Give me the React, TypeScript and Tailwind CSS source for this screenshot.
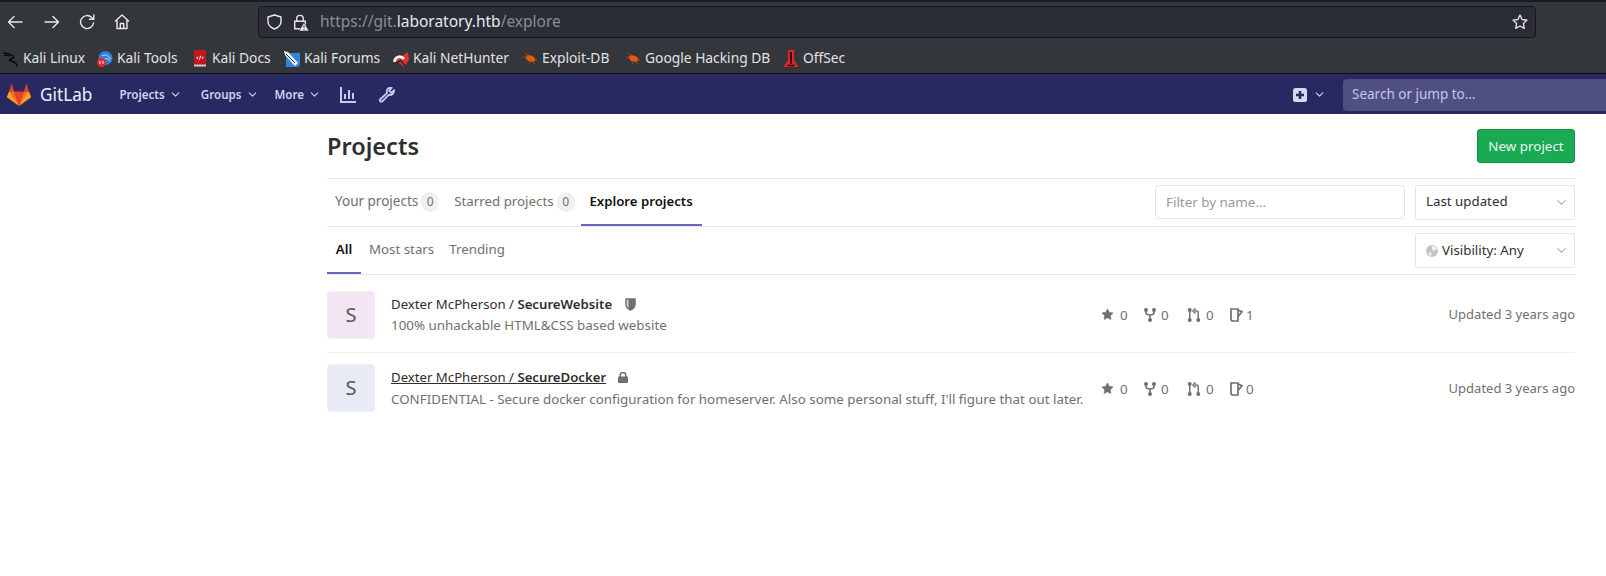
import React from "react";
import { ChevronDown, Star } from "lucide-react";

const font = { fontFamily: '"Noto Sans", sans-serif' };

const BackIcon = () => (
  <svg width="16" height="14" viewBox="0 0 16 14" fill="none" stroke="#e8e8ea" strokeWidth="1.4" strokeLinecap="round" strokeLinejoin="round">
    <path d="M15 7H1.500M7 1.500L1.500 7 7 12.500" />
  </svg>
);

const ForwardIcon = () => (
  <svg width="16" height="14" viewBox="0 0 16 14" fill="none" stroke="#e8e8ea" strokeWidth="1.4" strokeLinecap="round" strokeLinejoin="round">
    <path d="M1 7h13.500M9 1.500L14.500 7 9 12.500" />
  </svg>
);

const ReloadIcon = () => (
  <svg width="16" height="16" viewBox="0 0 16 16" fill="none" stroke="#e8e8ea" strokeWidth="1.4" strokeLinecap="round" strokeLinejoin="round">
    <path d="M14.500 9a6.500 6.500 0 1 1-1.800-5.500L14.500 5" />
    <path d="M14.800 1v4.300h-4.300" />
  </svg>
);

const HomeIcon = () => (
  <svg width="16" height="16" viewBox="0 0 16 16" fill="none" stroke="#e8e8ea" strokeWidth="1.4" strokeLinejoin="round">
    <path d="M1 7.500L8 1l7 6.500M3 6v8.500h10V6" />
    <path d="M6.300 14.500v-5h3.400v5" />
  </svg>
);

const ToolbarShield = () => (
  <svg width="15" height="16" viewBox="0 0 15 16" fill="none" stroke="#e8e8ea" strokeWidth="1.4" strokeLinejoin="round">
    <path d="M7.500 1l6.500 2v4.500c0 3.500-2.500 6-6.500 7.500C3.500 13.500 1 11 1 7.500V3z" />
  </svg>
);

const LockWarn = () => (
  <svg width="16" height="17" viewBox="0 0 16 17">
    <path d="M3.700 7V4.700a3.300 3.300 0 0 1 6.600 0V7" fill="none" stroke="#e8e8ea" strokeWidth="1.400" />
    <path d="M1.700 7.200h10.600v7.600H1.700z" fill="none" stroke="#e8e8ea" strokeWidth="1.400" />
    <path d="M11 8.500l5 8.500H6z" fill="#f4f4f4" stroke="#33363b" strokeWidth="0.700" />
    <path d="M11 11.500v2.500M11 15v1" stroke="#22242a" strokeWidth="1" />
  </svg>
);

const UrlStar = () => (
  <svg width="16" height="16" viewBox="0 0 16 16" fill="none" stroke="#e8e8ea" strokeWidth="1.300" strokeLinejoin="round">
    <path d="M8 1l2.100 4.500 4.900.6-3.600 3.400.9 4.900L8 12l-4.300 2.400.9-4.900L1 6.100l4.900-.6z" />
  </svg>
);

const KaliIcon = () => (
  <svg width="16" height="16" viewBox="0 0 16 16" fill="none" stroke="#050505" strokeWidth="1.300">
    <path d="M0 2.500C3 1.500 6.500 2.500 9.500 4.500c2 1.500 1 3-1.500 3.500-2 .5-2 2 1 2.300 2.500.3 4.500 1.700 5.500 5" />
    <path d="M1 5c2-1.200 4-1 6 0" />
  </svg>
);

const ToolsIcon = () => (
  <svg width="16" height="16" viewBox="0 0 16 16">
    <circle cx="8.500" cy="7" r="7" fill="#2f7fd6" />
    <path d="M5 5c3-2 6-1 9 3M8 8c2-1 4 0 5 2" stroke="#cfe4f7" fill="none" />
    <circle cx="4.500" cy="11.500" r="4.500" fill="#e02b2b" />
    <path d="M3 10v3M6 10v3" stroke="#fff" />
  </svg>
);

const DocsIcon = () => (
  <svg width="12" height="17" viewBox="0 0 12 17">
    <rect width="12" height="14.500" fill="#c4161c" />
    <rect y="14.500" width="12" height="2" fill="#e3c4c4" />
    <path d="M4 6.500L2.800 7.800 4 9M8 6.500l1.200 1.300L8 9M6.700 5.800L5.300 9.800" stroke="#fff" fill="none" />
  </svg>
);

const ForumsIcon = () => (
  <svg width="16" height="16" viewBox="0 0 16 16">
    <path d="M2 2h14v12l-2 2H2z" fill="#2f86e0" />
    <path d="M0 0l4 1 10 11-3 3L1 4z" fill="#f2f2f2" />
    <path d="M2 3l9 9" stroke="#222" strokeWidth="1" />
  </svg>
);

const HunterIcon = () => (
  <svg width="16" height="16" viewBox="0 0 16 16">
    <path d="M2 9L15 1l1 8-5 7z" fill="#e0332f" />
    <path d="M1.500 11c0-5 6-7.500 9.500-3" stroke="#f4f4f4" strokeWidth="2.600" fill="none" />
    <path d="M5 12c0-2 3-3 4-1l3 4" stroke="#2e2e2e" strokeWidth="1.800" fill="none" />
  </svg>
);

const BugIcon = () => (
  <svg width="14" height="11" viewBox="0 0 14 11">
    <ellipse cx="7.500" cy="5.500" rx="5" ry="3" fill="#e8590c" transform="rotate(20 7.500 5.500)" />
    <path d="M0 4l5 1M2 0l4 3M6 11l2-3M12 11l-2-2M14 7l-3 0" stroke="#b9500f" strokeWidth="0.800" />
  </svg>
);

const OffSecIcon = () => (
  <svg width="14" height="18" viewBox="0 0 14 18">
    <path d="M4 0h6v10l4 6v1H0v-1l4-6z" fill="#e0242c" />
    <path d="M7 2v12" stroke="#3a0a0a" strokeWidth="2" />
    <path d="M3.500 15.500h7" stroke="#3a0a0a" strokeWidth="1.600" />
  </svg>
);

const GitLabLogo = () => (
  <svg width="24" height="22" viewBox="0 0 24 22">
    <path d="M12 22L.3 13.500c-.3-.3-.4-.7-.3-1L2 7.500h5z" fill="#fca326" />
    <path d="M12 22l11.700-8.500c.3-.3.4-.7.3-1L22 7.500h-5z" fill="#fca326" />
    <path d="M12 22L2 7.500h5z" fill="#fc6d26" />
    <path d="M12 22L22 7.500h-5z" fill="#fc6d26" />
    <path d="M12 22L7 7.500h10z" fill="#e24329" />
    <path d="M2 7.500L4.300.4c.1-.4.6-.4.8 0L7 7.500z" fill="#e24329" />
    <path d="M22 7.500L19.700.4c-.1-.4-.6-.4-.8 0L17 7.500z" fill="#e24329" />
  </svg>
);

const ChartIcon = () => (
  <svg width="16" height="16" viewBox="0 0 16 16" fill="#c8c8f0">
    <path d="M0 0h2v14h14v2H0z" />
    <rect x="4" y="7" width="2" height="5" />
    <rect x="8" y="3" width="2" height="9" />
    <rect x="12" y="6" width="2" height="6" />
  </svg>
);

const WrenchIcon = () => (
  <svg width="16" height="16" viewBox="0 0 16 16" fill="none" stroke="#c8c8f0" strokeWidth="1.800">
    <path d="M15 3.500l-2.800 2.300-2-2L12.500 1C10 .2 7.600 2 7.800 4.600c0 .5.1.9.3 1.300L1.600 12c-.9.9-.9 1.700-.3 2.400.7.6 1.500.5 2.300-.3l6.200-6.300c2.800.9 5.500-1.600 5.200-4.300z" />
  </svg>
);

const PlusSquare = () => (
  <svg width="14" height="14" viewBox="0 0 14 14">
    <rect width="14" height="14" rx="2.500" fill="#d8d8f2" />
    <path d="M7 3v8M3 7h8" stroke="#2b2a63" strokeWidth="2.600" />
  </svg>
);

const ForkIcon = () => (
  <svg width="12" height="14" viewBox="0 0 12 14" fill="none" stroke="#707070" strokeWidth="1.600">
    <circle cx="2" cy="2" r="1.200" fill="#707070" />
    <circle cx="10" cy="2" r="1.200" fill="#707070" />
    <circle cx="6" cy="12" r="1.200" fill="#707070" />
    <path d="M2 3v1.500c0 1.500 1 2.500 4 2.500s4-1 4-2.500V3M6 7v4" />
  </svg>
);

const MergeIcon = () => (
  <svg width="12" height="14" viewBox="0 0 12 14" fill="none" stroke="#707070" strokeWidth="1.500">
    <circle cx="1.800" cy="2" r="1.200" fill="#707070" />
    <circle cx="1.800" cy="12" r="1.200" fill="#707070" />
    <circle cx="10.200" cy="12" r="1.200" fill="#707070" />
    <path d="M1.800 3v8M10.200 11V4.500C10.200 3.500 9.700 3 8.700 3H7" />
    <path d="M7.500 .5L5 3l2.500 2.500" />
  </svg>
);

const IssueIcon = () => (
  <svg width="13" height="14" viewBox="0 0 13 14" fill="none" stroke="#707070" strokeWidth="1.700">
    <path d="M1 1h7v12H3c-1.200 0-2-.8-2-2z" />
    <path d="M8 2l4 1.800-4 4.700" />
  </svg>
);

const ShieldFilled = () => (
  <svg width="11" height="13" viewBox="0 0 11 13">
    <path d="M1 1h9v5c0 3-2 5-4.500 6C3 11 1 9 1 6z" fill="#d8d8d8" stroke="#707070" strokeWidth="1.500" />
    <path d="M3.500 1h6.500v5c0 3-2 5-4.500 6-.8-.3-1.400-.7-2-1.200z" fill="#707070" />
  </svg>
);

const LockFilled = () => (
  <svg width="10" height="11" viewBox="0 0 10 11">
    <rect y="4.500" width="10" height="6.500" rx="1" fill="#707070" />
    <path d="M2.200 5V3.200a2.800 2.800 0 0 1 5.600 0V5" stroke="#707070" strokeWidth="1.500" fill="none" />
  </svg>
);

const GlobeIcon = () => (
  <svg width="12" height="12" viewBox="0 0 12 12">
    <circle cx="6" cy="6" r="6" fill="#c4c4c4" />
    <path d="M6 1c2-.5 4 .5 5 3L8 6 6 4.500zM3 7l3 1-1 3.500C3.500 11 2 9.500 3 7z" fill="#eeeeee" />
  </svg>
);

const bookmarks = [
  { name: "Kali Linux", icon: <KaliIcon />, cls: "w-[94px] gap-[4px]" },
  { name: "Kali Tools", icon: <ToolsIcon />, cls: "w-[97px] gap-[4px]" },
  { name: "Kali Docs", icon: <DocsIcon />, cls: "w-[90px] gap-[6px]" },
  { name: "Kali Forums", icon: <ForumsIcon />, cls: "w-[109px] gap-[4px]" },
  { name: "Kali NetHunter", icon: <HunterIcon />, cls: "w-[130px] gap-[4px]" },
  { name: "Exploit-DB", icon: <BugIcon />, cls: "w-[103px] gap-[5px]" },
  { name: "Google Hacking DB", icon: <BugIcon />, cls: "w-[158px] gap-[5px]" },
  { name: "OffSec", icon: <OffSecIcon />, cls: "gap-[5px]" },
];

const projects = [
  {
    name: "SecureWebsite",
    desc: "100% unhackable HTML&CSS based website",
    bg: "bg-[#f4e5f4]",
    issues: 1,
    badge: <ShieldFilled />,
    gap: "ml-[13px]",
    link: false,
    row: "pt-[3px] border-b border-[#f0f0f0]",
    stats: "",
    lead: "leading-[21px]",
  },
  {
    name: "SecureDocker",
    desc: "CONFIDENTIAL - Secure docker configuration for homeserver. Also some personal stuff, I'll figure that out later.",
    bg: "bg-[#e8eaf6]",
    issues: 0,
    badge: <LockFilled />,
    gap: "ml-[12px]",
    link: true,
    row: "pb-[8px]",
    stats: "mt-[2px]",
    lead: "leading-[22px]",
  },
];

const Stat = ({ icon, value, cls }: { icon: React.ReactNode; value: number; cls: string }) => (
  <div className={`flex items-center ${cls}`}>
    {icon}
    <span>{value}</span>
  </div>
);

const NavItem = ({ label, cls }: { label: string; cls: string }) => (
  <div className={`flex items-center gap-[4px] text-[11.6px] font-semibold text-[#d1d1f0] ${cls}`}>
    {label}
    <ChevronDown size={13} strokeWidth={2} />
  </div>
);

const Badge = () => (
  <span className="ml-[3px] flex h-[20px] w-[18px] items-center justify-center rounded-full bg-[#f0f0f0] text-[12px]">0</span>
);

export default function App() {
  return (
    <div className="flex h-[576px] w-[1606px] flex-col overflow-hidden bg-white" style={font}>
      {/* browser chrome */}
      <div className="h-[2px] bg-[#1c1b22]" />
      <div className="flex h-[71px] flex-col bg-[#33363b]">
        <div className="flex h-[40px] items-center">
          <div className="flex w-[258px] items-center">
            <span className="ml-[7px]"><BackIcon /></span>
            <span className="ml-[21px]"><ForwardIcon /></span>
            <span className="ml-[19px]"><ReloadIcon /></span>
            <span className="ml-[19px]"><HomeIcon /></span>
          </div>
          <div className="flex h-[32px] w-[1278px] items-center rounded-[4px] border border-[#16161a] bg-[#2a2c36] text-[15.5px]">
            <span className="ml-[8px]"><ToolbarShield /></span>
            <span className="ml-[11px]"><LockWarn /></span>
            <span className="ml-[11px] text-[#8b8c92]">
              https://git.<span className="text-[#e8e8ea]">laboratory.htb</span>/explore
            </span>
            <span className="ml-auto mr-[7px]"><UrlStar /></span>
          </div>
        </div>
        <div className="flex h-[31px] items-center pl-[3px] pt-[2px] text-[13.8px] text-[#e2e2e4]">
          {bookmarks.map((b) => (
            <div key={b.name} className={`flex items-center ${b.cls}`}>
              {b.icon}
              <span>{b.name}</span>
            </div>
          ))}
        </div>
      </div>

      {/* gitlab nav */}
      <div className="flex h-[41px] items-center border-t border-[#0f0f12] bg-[#292961] pt-[1px]">
        <div className="ml-[7px]">
          <GitLabLogo />
        </div>
        <span className="ml-[9px] text-[17.2px] text-[#f0f0fa]">GitLab</span>
        <NavItem label="Projects" cls="ml-[27px]" />
        <NavItem label="Groups" cls="ml-[19px]" />
        <NavItem label="More" cls="ml-[16px]" />
        <div className="ml-[19px]">
          <ChartIcon />
        </div>
        <div className="ml-[23px]">
          <WrenchIcon />
        </div>
        <div className="ml-auto flex items-center gap-[6px] text-[#d1d1f0]">
          <PlusSquare />
          <ChevronDown size={13} strokeWidth={2} />
        </div>
        <div className="ml-[17px] flex h-[32px] w-[263px] items-center rounded-l-[4px] bg-[#4f4f82] pl-[9px] text-[13.5px] text-[#c5c5e8]">
          Search or jump to…
        </div>
      </div>

      {/* page */}
      <div className="ml-[327px] mr-[31px] flex flex-col">
        <div className="flex h-[65px] items-center justify-between border-b border-[#e5e5e5]">
          <h1 className="pt-[2px] text-[23.5px] font-semibold text-[#2e2e2e]">Projects</h1>
          <button className="h-[34px] w-[98px] rounded-[3px] border border-[#168f48] bg-[#1aaa55] text-[13.4px] text-[#e8f7ee]">
            New project
          </button>
        </div>

        <div className="flex h-[48px] items-center justify-between border-b border-[#e5e5e5]">
          <div className="flex h-full items-stretch text-[13.5px] text-[#707070]">
            <div className="flex items-center pb-[2px] pl-[8px]">
              Your projects
              <Badge />
            </div>
            <div className="ml-[15px] flex items-center pb-[2px] text-[13.3px]">
              Starred projects
              <Badge />
            </div>
            <div className="ml-[6px] flex w-[121px] items-center justify-center border-b-2 border-[#6666c4] text-[13.2px] font-semibold text-[#111111]">
              Explore projects
            </div>
          </div>
          <div className="mb-[1px] flex items-center gap-[10px]">
            <div className="flex h-[34px] w-[250px] items-center rounded-[4px] border border-[#e5e5e5] pl-[10px] text-[13.4px] text-[#9a9a9a]">
              Filter by name...
            </div>
            <div className="flex h-[35px] w-[160px] items-center justify-between rounded-[3px] border border-[#e5e5e5] pl-[10px] pr-[5px] text-[13.3px] text-[#2e2e2e]">
              Last updated
              <ChevronDown size={15} strokeWidth={2} className="text-[#b5b5b5]" />
            </div>
          </div>
        </div>

        <div className="flex h-[48px] items-center justify-between border-b border-[#e5e5e5]">
          <div className="flex h-full items-stretch text-[13.3px] text-[#707070]">
            <div className="flex w-[34px] items-center justify-center border-b-2 border-[#6666c4] font-semibold text-[#111111]">All</div>
            <div className="ml-[8px] flex items-center pb-[2px]">Most stars</div>
            <div className="ml-[15px] flex items-center pb-[2px]">Trending</div>
          </div>
          <div className="flex h-[35px] w-[160px] items-center justify-between rounded-[3px] border border-[#e5e5e5] pl-[10px] pr-[5px] text-[13.3px] text-[#2e2e2e]">
            <span className="flex items-center gap-[4px]">
              <GlobeIcon />
              Visibility: Any
            </span>
            <ChevronDown size={15} strokeWidth={2} className="text-[#b5b5b5]" />
          </div>
        </div>

        {projects.map((p) => (
          <div key={p.name} className={`flex h-[78px] items-center text-[13.35px] ${p.row}`}>
            <div className={`flex h-[48px] w-[48px] shrink-0 items-center justify-center rounded-[4px] border border-[#f0f0f0] text-[20px] text-[#555555] ${p.bg}`}>
              S
            </div>
            <div className={`ml-[16px] flex w-[710px] shrink-0 flex-col ${p.lead}`}>
              <div className="flex items-center text-[13.2px] text-[#2e2e2e]">
                <span className={p.link ? "underline" : ""}>
                  Dexter McPherson / <span className="font-semibold">{p.name}</span>
                </span>
                <span className={p.gap}>{p.badge}</span>
              </div>
              <div className="text-[#707070]">{p.desc}</div>
            </div>
            <div className={`flex items-center text-[#707070] ${p.stats}`}>
              <Stat icon={<Star size={13} fill="#707070" strokeWidth={1} />} value={0} cls="w-[43px] gap-[6px]" />
              <Stat icon={<ForkIcon />} value={0} cls="w-[44px] gap-[5px]" />
              <Stat icon={<MergeIcon />} value={0} cls="w-[42px] gap-[6px]" />
              <Stat icon={<IssueIcon />} value={p.issues} cls="gap-[3px]" />
            </div>
            <span className={`ml-auto text-[13px] text-[#707070] ${p.stats}`}>Updated 3 years ago</span>
          </div>
        ))}
      </div>
    </div>
  );
}
